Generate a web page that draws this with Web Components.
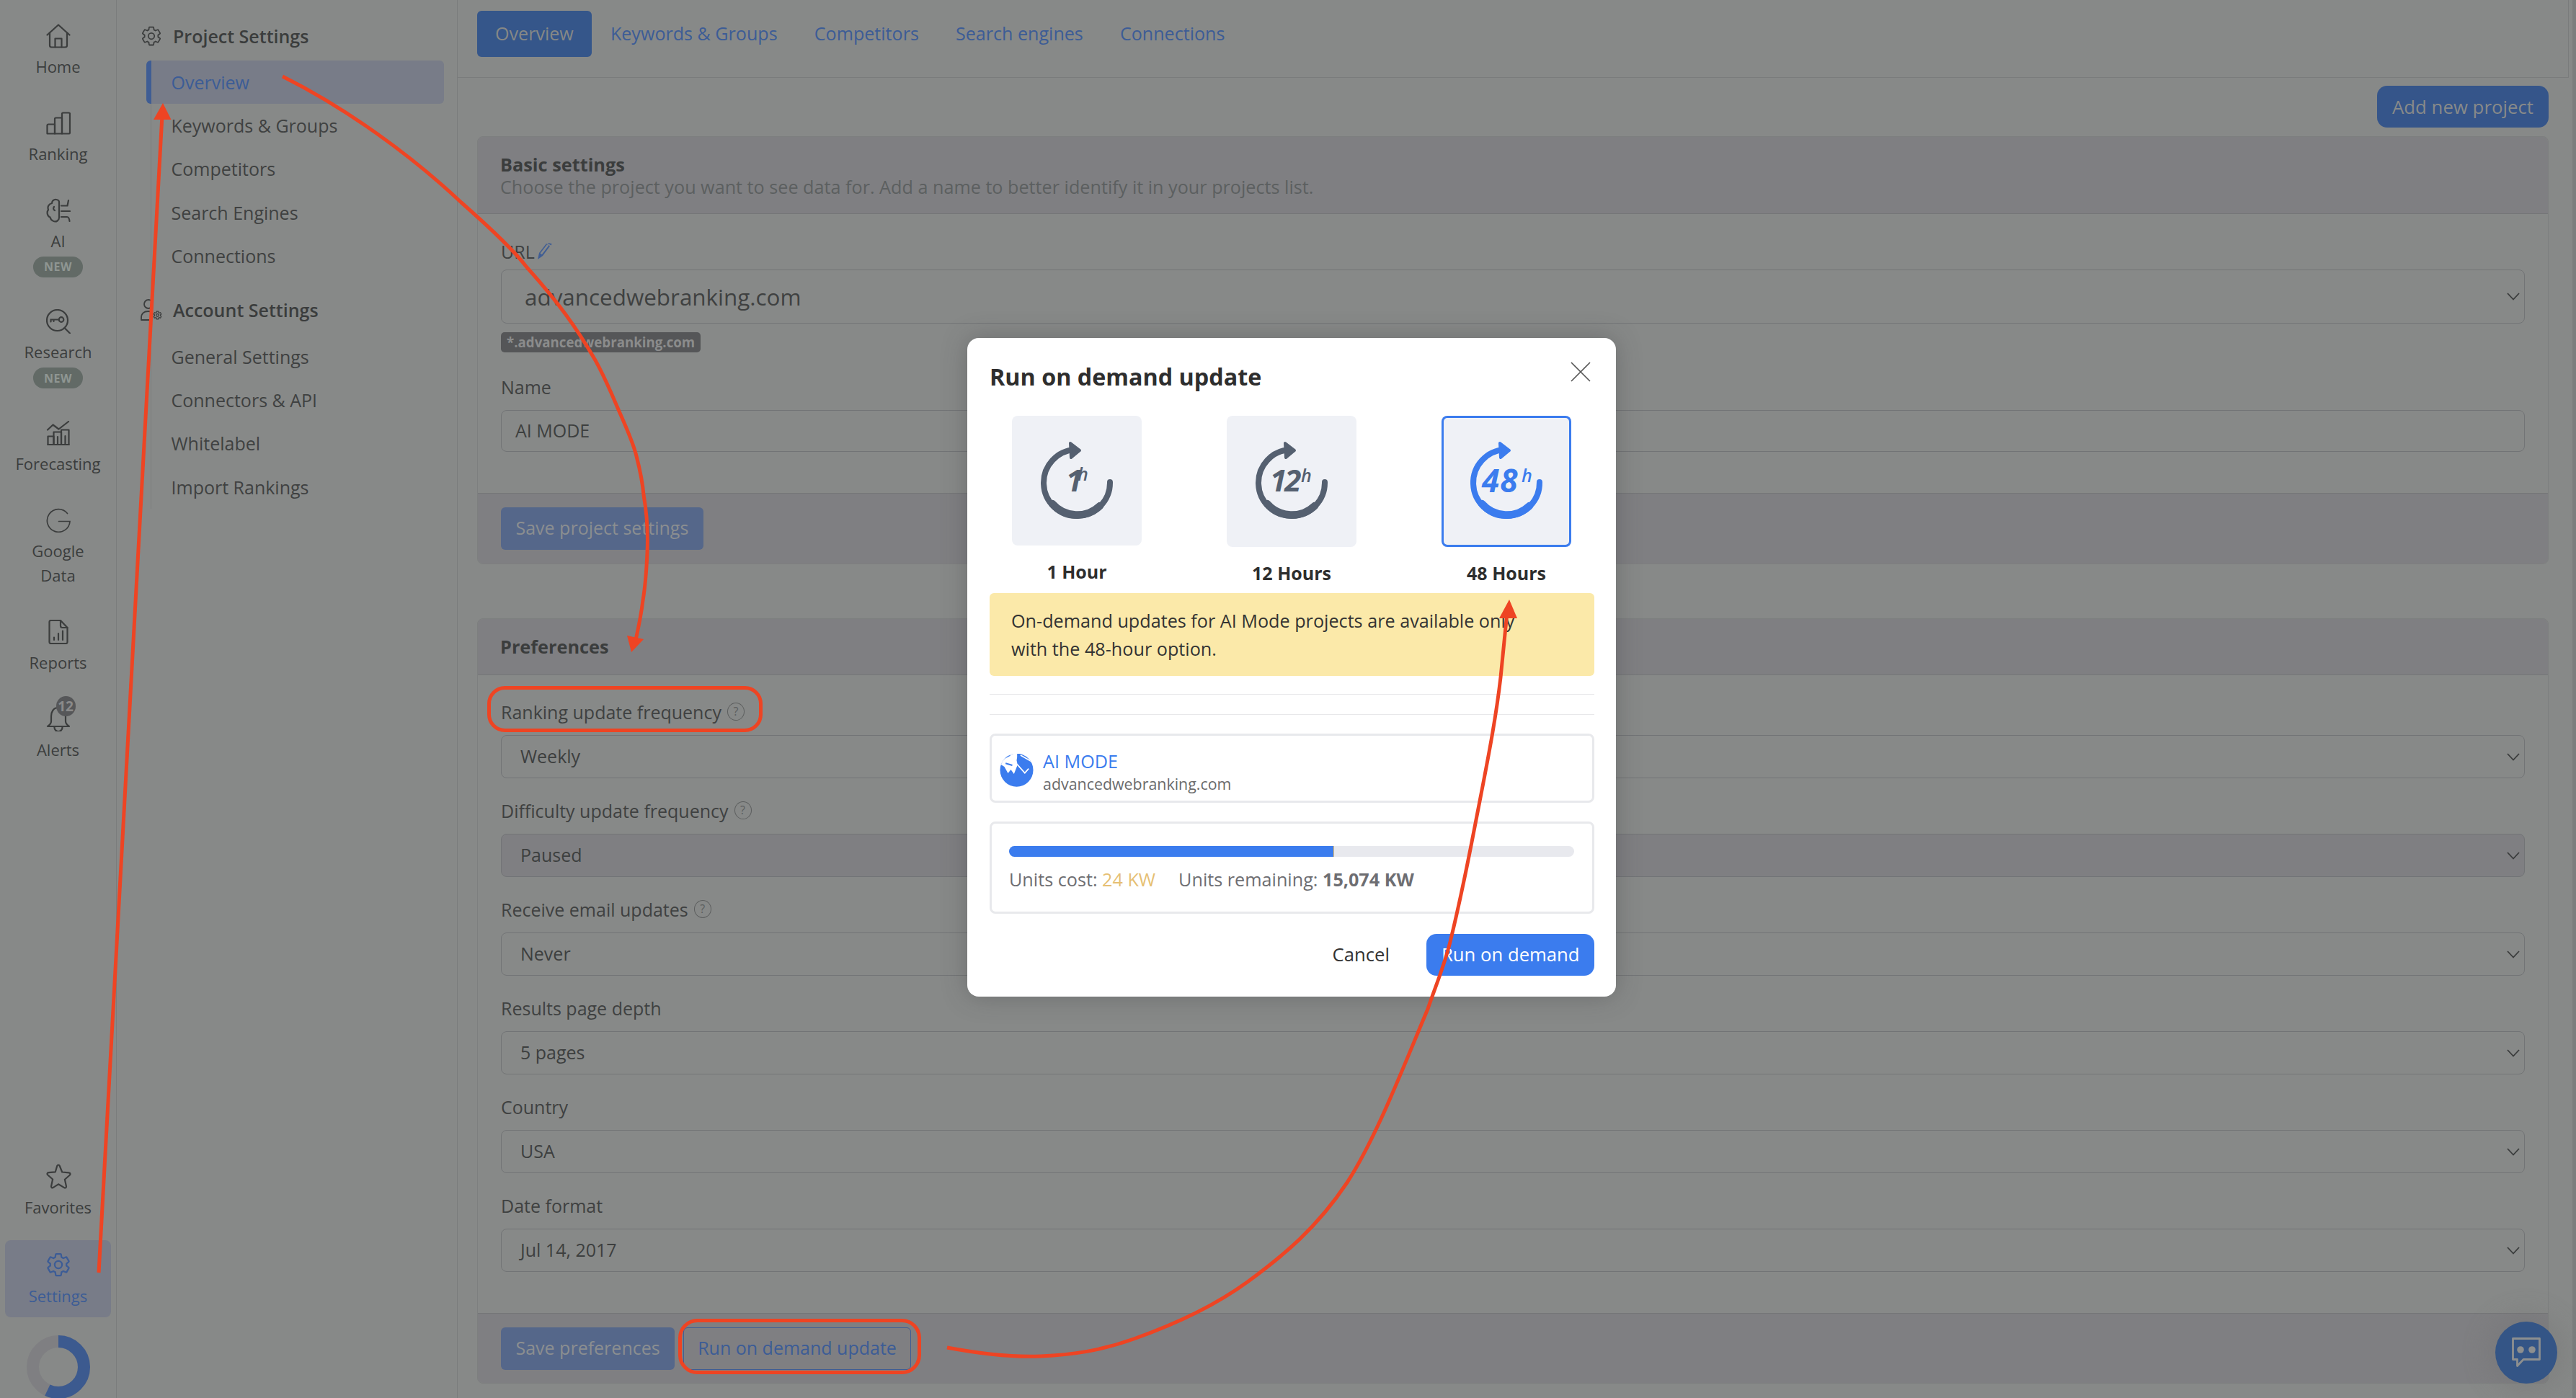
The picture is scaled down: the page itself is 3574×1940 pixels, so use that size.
<!DOCTYPE html>
<html lang="en">
<head>
<meta charset="utf-8">
<title>Project settings</title>
<style>
  html, body { margin: 0; height: 100%; }
  body { width: 3574px; height: 1940px; overflow: hidden; background: #878988; font-family: "Open Sans", "Liberation Sans", sans-serif; }
</style>
</head>
<body>
<app-shell>
  <rail-nav>
    <rail-item>
      <svg slot="icon" width="34" height="34" viewBox="0 0 34 34" fill="none" stroke="currentColor" stroke-width="2.2" stroke-linejoin="round" stroke-linecap="round"><path d="M1.5 15.5 17 1.5l15.500 14"/><path d="M5 12.500V30a2.500 2.500 0 0 0 2.500 2.500h19A2.500 2.500 0 0 0 29 30V12.500"/><path d="M12.500 32.500V20.500h9v12"/></svg>
      Home
    </rail-item>
    <rail-item>
      <svg slot="icon" width="34" height="34" viewBox="0 0 34 34" fill="none" stroke="currentColor" stroke-width="2.200" stroke-linejoin="round"><path d="M1.500 31.500V20a1.500 1.500 0 0 1 1.500-1.500h9V31.500z"/><path d="M12 31.500V11a1.500 1.500 0 0 1 1.500-1.500H22V31.500z"/><path d="M22 31.500V4a1.500 1.500 0 0 1 1.500-1.500h8A1.500 1.500 0 0 1 33 4v26a1.500 1.500 0 0 1-1.500 1.500z"/></svg>
      Ranking
    </rail-item>
    <rail-item>
      <svg slot="icon" width="34" height="34" viewBox="0 0 34 34" fill="none" stroke="currentColor" stroke-width="2.200" stroke-linecap="round" stroke-linejoin="round"><path d="M14 2C10.500 1.500 8 4 8 7 3.500 8 1.500 12 3 16c-2.500 3.500-1.500 9 2.500 10.500C6.500 31 12 34 15.500 31.500c1.500-1 2.500-2.500 2.500-4.500V5.500C18 3.500 16 2.300 14 2z"/><path d="M21 10.500h8.500L31 3"/><path d="M21 18h12"/><path d="M21 26h8c2 0 3 1.500 3.500 6"/><path d="M11 12c-1.500 2-1 4 1 5"/></svg>
      AI
      <new-badge slot="extra">NEW</new-badge>
    </rail-item>
    <rail-item>
      <svg slot="icon" width="34" height="34" viewBox="0 0 34 34" fill="none" stroke="currentColor" stroke-width="2.200" stroke-linecap="round"><circle cx="15.500" cy="15.500" r="14.500"/><path d="M25.500 26 33 33.500"/><circle cx="21" cy="14.500" r="3.300"/><path d="M17.500 14.500H6.500v3M10.500 14.500v2.500"/></svg>
      Research
      <new-badge slot="extra">NEW</new-badge>
    </rail-item>
    <rail-item>
      <svg slot="icon" width="34" height="34" viewBox="0 0 34 34" fill="none" stroke="currentColor" stroke-width="2.200" stroke-linecap="round" stroke-linejoin="round"><path d="M2 12.500 9.500 5.500 17.500 11.500 31 1"/><path d="M2.500 33V21.500h8V33z"/><path d="M10.500 33V15.500h10.500V33z"/><path d="M21 33V12.500h10.500V33z"/><path d="M2.500 33h29"/><path d="M16 33V22M26.500 33V21"/></svg>
      Forecasting
    </rail-item>
    <rail-item>
      <svg slot="icon" width="34" height="34" viewBox="0 0 34 34" fill="none" stroke="currentColor" stroke-width="1.700" stroke-linecap="round"><path d="M29.500 7.500A15.800 15.800 0 1 0 33 18.500H17.500"/></svg>
      Google<br>Data
    </rail-item>
    <rail-item>
      <svg slot="icon" width="34" height="34" viewBox="0 0 34 34" fill="none" stroke="currentColor" stroke-width="2.200" stroke-linecap="round" stroke-linejoin="round"><path d="M7 1h13l9.500 10v20a2 2 0 0 1-2 2H6.500a2 2 0 0 1-2-2V3A2 2 0 0 1 7 1z"/><path d="M20 1v7.500a2.500 2.500 0 0 0 2.500 2.500h7"/><path d="M11 28v-3.500M17 28V19M23 28V15.500"/></svg>
      Reports
    </rail-item>
    <rail-item>
      <span slot="icon" class="bell">
        <svg width="34" height="34" viewBox="0 0 34 34" fill="none" stroke="currentColor" stroke-width="2.200" stroke-linecap="round" stroke-linejoin="round"><path d="M17 1C10 1 7 7 7 13v7c0 3-2 5-5 7h30c-3-2-5-4-5-7v-7c0-6-3-12-10-12z"/><path d="M11.500 27v1.500a5.500 5.500 0 0 0 11 0V27"/></svg>
        <alert-count>12</alert-count>
      </span>
      Alerts
    </rail-item>
    <rail-foot>
      <rail-item>
        <svg slot="icon" width="36" height="36" viewBox="0 0 36 36" fill="none" stroke="currentColor" stroke-width="2.200" stroke-linejoin="round"><path d="M18 1.500c.8 0 1.400.6 1.800 1.500l3.400 8.500 9.300.9c2 .2 2.600 2 1.200 3.300l-6.800 6 2 9.400c.4 1.900-1.200 3-2.800 2L18 28.300 10.900 32.900c-1.600 1-3.200-.1-2.800-2l2-9.400-6.800-6c-1.400-1.300-.8-3.100 1.200-3.300l9.300-.9L16.200 3c.4-.9 1-1.500 1.800-1.500z"/></svg>
        Favorites
      </rail-item>
      <rail-item active>
        <svg slot="icon" width="36" height="36" viewBox="0 0 24 24" fill="none" stroke="currentColor" stroke-width="1.500" stroke-linejoin="round"><path d="M19.430 12.980c.04-.32.07-.64.07-.98s-.03-.66-.07-.98l2.110-1.650c.19-.15.24-.42.12-.64l-2-3.460c-.12-.22-.39-.3-.61-.22l-2.490 1c-.52-.4-1.080-.73-1.690-.98l-.38-2.650C14.460 2.180 14.250 2 14 2h-4c-.25 0-.46.18-.49.42l-.38 2.650c-.61.25-1.170.59-1.690.98l-2.490-1c-.23-.09-.49 0-.61.22l-2 3.460c-.13.22-.07.49.12.64l2.110 1.650c-.04.32-.07.65-.07.98s.03.66.07.98l-2.110 1.650c-.19.15-.24.42-.12.64l2 3.460c.12.22.39.3.61.22l2.490-1c.52.4 1.080.73 1.690.98l.38 2.650c.03.24.24.42.49.42h4c.25 0 .46-.18.49-.42l.38-2.650c.61-.25 1.170-.59 1.690-.98l2.490 1c.23.09.49 0 .61-.22l2-3.460c.12-.22.07-.49-.12-.64l-2.110-1.650z"/><circle cx="12" cy="12" r="3.400"/></svg>
        Settings
      </rail-item>
      <usage-donut></usage-donut>
    </rail-foot>
  </rail-nav>

  <side-nav>
    <nav-head>
      <svg slot="icon" width="30" height="30" viewBox="0 0 24 24" fill="none" stroke="currentColor" stroke-width="1.400" stroke-linejoin="round"><path d="M19.430 12.980c.04-.32.07-.64.07-.98s-.03-.66-.07-.98l2.110-1.650c.19-.15.24-.42.12-.64l-2-3.460c-.12-.22-.39-.3-.61-.22l-2.490 1c-.52-.4-1.080-.73-1.690-.98l-.38-2.650C14.460 2.180 14.250 2 14 2h-4c-.25 0-.46.18-.49.42l-.38 2.650c-.61.25-1.170.59-1.690.98l-2.490-1c-.23-.09-.49 0-.61.22l-2 3.460c-.13.22-.07.49.12.64l2.110 1.650c-.04.32-.07.65-.07.98s.03.66.07.98l-2.110 1.650c-.19.15-.24.42-.12.64l2 3.460c.12.22.39.3.61.22l2.490-1c.52.4 1.080.73 1.690.98l.38 2.650c.03.24.24.42.49.42h4c.25 0 .46-.18.49-.42l.38-2.650c.61-.25 1.170-.59 1.690-.98l2.490 1c.23.09.49 0 .61-.22l2-3.460c.12-.22.07-.49-.12-.64l-2.110-1.650z"/><circle cx="12" cy="12" r="3.400"/></svg>
      Project Settings
    </nav-head>
    <nav-link active>Overview</nav-link>
    <nav-link>Keywords &amp; Groups</nav-link>
    <nav-link>Competitors</nav-link>
    <nav-link>Search Engines</nav-link>
    <nav-link>Connections</nav-link>
    <nav-head second>
      <svg slot="icon" width="30" height="30" viewBox="0 0 30 30" fill="none" stroke="currentColor" stroke-width="1.800" stroke-linecap="round" stroke-linejoin="round"><circle cx="11" cy="7" r="6"/><path d="M1 29v-3c0-6 4-9 9.500-9 2 0 3.500.4 5 1M1 29h14"/><g transform="translate(17 16) scale(.54)" stroke-width="2.400"><path d="M19.430 12.980c.04-.32.07-.64.07-.98s-.03-.66-.07-.98l2.110-1.650c.19-.15.24-.42.12-.64l-2-3.460c-.12-.22-.39-.3-.61-.22l-2.490 1c-.52-.4-1.080-.73-1.690-.98l-.38-2.650C14.460 2.180 14.250 2 14 2h-4c-.25 0-.46.18-.49.42l-.38 2.650c-.61.25-1.170.59-1.690.98l-2.490-1c-.23-.09-.49 0-.61.22l-2 3.460c-.13.22-.07.49.12.64l2.110 1.650c-.04.32-.07.65-.07.98s.03.66.07.98l-2.110 1.650c-.19.15-.24.42-.12.64l2 3.460c.12.22.39.3.61.22l2.490-1c.52.4 1.080.73 1.690.98l.38 2.650c.03.24.24.42.49.42h4c.25 0 .46-.18.49-.42l.38-2.650c.61-.25 1.170-.59 1.690-.98l2.490 1c.23.09.49 0 .61-.22l2-3.460c.12-.22.07-.49-.12-.64l-2.110-1.650z"/><circle cx="12" cy="12" r="3.400"/></g></svg>
      Account Settings
    </nav-head>
    <nav-link>General Settings</nav-link>
    <nav-link>Connectors &amp; API</nav-link>
    <nav-link>Whitelabel</nav-link>
    <nav-link>Import Rankings</nav-link>
  </side-nav>

  <main-view>
    <tab-bar>
      <tab-item active>Overview</tab-item>
      <tab-item>Keywords &amp; Groups</tab-item>
      <tab-item>Competitors</tab-item>
      <tab-item>Search engines</tab-item>
      <tab-item>Connections</tab-item>
    </tab-bar>
    <page-toolbar><app-button variant="solid">Add new project</app-button></page-toolbar>

    <settings-panel heading="Basic settings" description="Choose the project you want to see data for. Add a name to better identify it in your projects list.">
      <form-field large label="URL" value="advancedwebranking.com">
        <svg slot="after" width="22" height="24" viewBox="0 0 22 24" fill="#3f5d94" style="margin-left:-5px"><path d="M1 23 3 14 13 1l5 3.500L8 18z M4.500 14.500 14 2.200l2.300 1.600L6.800 16.200z" fill-rule="evenodd"/><path d="M14.500 0l5 3.500 1.200-2L16 0z"/></svg>
        <field-tag slot="below">*.advancedwebranking.com</field-tag>
      </form-field>
      <form-field input label="Name" value="AI MODE"></form-field>
      <app-button slot="footer" variant="muted">Save project settings</app-button>
    </settings-panel>

    <settings-panel second heading="Preferences">
      <form-field help label="Ranking update frequency" value="Weekly"></form-field>
      <form-field help disabled label="Difficulty update frequency" value="Paused"></form-field>
      <form-field help label="Receive email updates" value="Never"></form-field>
      <form-field label="Results page depth" value="5 pages"></form-field>
      <form-field label="Country" value="USA"></form-field>
      <form-field last label="Date format" value="Jul 14, 2017"></form-field>
      <app-button slot="footer" variant="muted">Save preferences</app-button>
      <app-button slot="footer" variant="outline">Run on demand update</app-button>
    </settings-panel>
  </main-view>

  <od-modal>
    <time-card slot="cards" digits="1" label="1 Hour" dx="75" hx="91" hy="90" short></time-card>
    <time-card slot="cards" digits="12" label="12 Hours" dx="60" hx="103" hy="92"></time-card>
    <time-card slot="cards" digits="48" label="48 Hours" dx="56" hx="111" hy="92" wide selected></time-card>
  </od-modal>
  <chat-bubble></chat-bubble>
  <annotation-layer></annotation-layer>
</app-shell>

<script>
const GREY_TEXT = '#3b3d3d'
const BLUE_TEXT = '#3c5c96'

// small helper, every element gets an open shadow root from a template
function component(name, css, html, extra) {
  const template = document.createElement('template')
  template.innerHTML = `<style>${css}</style>${html}`
  class Element_ extends HTMLElement {
    constructor() {
      super()
      this.attachShadow({ mode: 'open' }).appendChild(template.content.cloneNode(true))
    }
    connectedCallback() {
      if (extra) extra.call(this, this.shadowRoot)
    }
  }
  customElements.define(name, Element_)
}

component('app-shell', `
  :host { display: flex; position: relative; width: 3574px; height: 1940px; overflow: hidden; color: ${GREY_TEXT}; }
`, `<slot></slot>`)

component('rail-nav', `
  :host { display: flex; flex-direction: column; gap: 44.800px; box-sizing: border-box; width: 162px; height: 1940px; padding-top: 33px; border-right: 1px solid #7a7c7c; flex: none; overflow: hidden; }
`, `<slot></slot>`)

component('rail-foot', `
  :host { display: flex; flex-direction: column; margin-top: auto; }
`, `<slot></slot>`)

component('rail-item', `
  :host { display: flex; flex-direction: column; align-items: center; font-size: 22px; color: ${GREY_TEXT}; text-align: center; }
  :host([active]) { margin: 29px 7px 0; padding: 17px 0 13px; border-radius: 8px; background: #787c88; color: ${BLUE_TEXT}; }
  .icon { display: flex; align-items: center; justify-content: center; height: 34px; }
  .label { margin-top: 8px; line-height: 34px; }
  :host([active]) .label { margin-top: 9px; }
  ::slotted(.bell) { position: relative; display: block; height: 34px; }
  ::slotted(new-badge) { margin-top: 5px; }
`, `<div class="icon"><slot name="icon"></slot></div><div class="label"><slot></slot></div><slot name="extra"></slot>`)

component('new-badge', `
  :host { display: flex; align-items: center; justify-content: center; width: 69px; height: 29px; border-radius: 15px; background: #626a66; color: #8f9692; font-size: 16px; font-weight: 700; letter-spacing: .5px; }
`, `<slot></slot>`)

component('alert-count', `
  :host { position: absolute; left: 14px; top: -15px; display: flex; align-items: center; justify-content: center; width: 27px; height: 28px; border-radius: 50%; background: #565759; color: #8a8a8a; font-size: 19px; font-weight: 700; }
`, `<slot></slot>`)

component('usage-donut', `
  :host { display: flex; justify-content: center; margin-top: 25px; height: 87px; }
`, `<svg width="88" height="88" viewBox="0 0 88 88" fill="none" stroke-width="17">
  <circle cx="44" cy="44" r="35.5" stroke="#7f7f82"/>
  <circle cx="44" cy="44" r="35.5" stroke="#3c5a8f" stroke-dasharray="127 223" transform="rotate(-90 44 44)"/>
</svg>`)

component('side-nav', `
  :host { display: block; box-sizing: border-box; width: 473px; height: 1940px; padding-top: 35px; border-right: 1px solid #7a7c7c; flex: none; font-size: 25px;
    background: linear-gradient(#7d7f7f, #7d7f7f) 47px 144px / 1px 562px no-repeat; }
`, `<slot></slot>`)

component('nav-head', `
  :host { display: flex; align-items: center; gap: 15px; height: 30px; padding-left: 33px; margin-bottom: 19px; font-weight: 600; color: ${GREY_TEXT}; }
  :host([second]) { margin-top: 29px; margin-bottom: 20px; }
  ::slotted(svg) { display: block; }
`, `<slot name="icon"></slot><slot></slot>`)

component('nav-link', `
  :host { display: flex; align-items: center; box-sizing: border-box; height: 60.4px; margin: 0 18px 0 41px; padding: 0 0 1px 34.5px; color: #3f4141; border-radius: 6px; }
  :host([active]) { background: #787c88; border-left: 7px solid #3f5d94; padding-left: 27.5px; color: ${BLUE_TEXT}; }
`, `<slot></slot>`)

component('main-view', `
  :host { display: flex; flex-direction: column; box-sizing: border-box; width: 2939px; height: 1940px; flex: none; border-right: 5px solid #7c7e7e; overflow: hidden; }
`, `<slot></slot>`)

component('tab-bar', `
  :host { display: flex; gap: 1.100px; box-sizing: border-box; height: 108px; margin-right: 5px; padding: 15px 0 0 27px; border-bottom: 1px solid #7a7c7c; border-right: 1px solid #7a7c7c; }
`, `<slot></slot>`)

component('tab-item', `
  :host { display: block; height: 64px; padding: 0 25px; line-height: 62px; font-size: 25.100px; color: ${BLUE_TEXT}; border-radius: 6px; }
  :host([active]) { background: #35568a; color: #868886; }
`, `<slot></slot>`)

component('page-toolbar', `
  :host { display: flex; justify-content: flex-end; margin: 11px 33px 12px 27px; }
`, `<slot></slot>`)

component('app-button', `
  :host { display: inline-flex; align-items: center; box-sizing: border-box; height: 59px; padding: 0 20.5px 3px; font-size: 25px; border-radius: 6px; white-space: nowrap; }
  :host([variant=solid]) { background: #35558a; color: #888a89; border-radius: 14px; height: 58px; font-size: 25.800px; font-weight: 500; padding: 0 21px; }
  :host([variant=muted]) { background: #55678a; color: #8b8e90; }
  :host([variant=outline]) { border: 1.5px solid #3f5d94; color: ${BLUE_TEXT}; padding: 0 19px 3px; }
`, `<slot></slot>`)

component('settings-panel', `
  :host { display: block; box-sizing: border-box; margin: 0 33px 0 27px; border: 1px solid #7d7f7f; border-radius: 8px; overflow: hidden; }
  :host([second]) { margin-top: 75px; }
  header { display: flex; flex-direction: column; justify-content: center; box-sizing: border-box; height: 107px; padding: 1px 31px 0; background: #7f7f82; border-bottom: 1px solid #747677; line-height: 31px; }
  :host([second]) header { height: 78px; padding-top: 0; }
  h2 { margin: 0; font-size: 25.300px; font-weight: 700; color: #3b3d3d; }
  p { margin: 0; font-size: 25.200px; color: #5c5f60; }
  p:empty { display: none; }
  .body { padding: 35px 32px 57px; }
  :host([second]) .body { padding-top: 34px; }
  footer { display: flex; gap: 12px; padding: 19px 32px 19px; background: #7f7f82; border-top: 1px solid #747677; }
  :host([second]) footer { padding-bottom: 18px; }
`, `<header><h2></h2><p></p></header><div class="body"><slot></slot></div><footer><slot name="footer"></slot></footer>`, function (root) {
  root.querySelector('h2').textContent = this.getAttribute('heading')
  root.querySelector('p').textContent = this.getAttribute('description') || ''
})

component('form-field', `
  :host { display: block; margin-bottom: 28px; font-size: 25px; }
  :host([large]) { margin-bottom: 31px; }
  :host([input]), :host([last]) { margin-bottom: 0; }
  .label { display: flex; align-items: center; gap: 8px; box-sizing: border-box; height: 34px; padding-bottom: 1px; color: #3f4141; }
  .control { display: flex; align-items: center; justify-content: space-between; box-sizing: border-box; height: 60px; margin-top: 15px; padding: 0 6px 0 26px; border: 1px solid #727476; border-radius: 8px; color: #3d3f3f; }
  .value { margin-bottom: 2px; }
  :host([large]) .control { height: 75px; margin-top: 8px; padding-left: 32px; font-size: 31.400px; color: #3f4141; }
  :host([large]) .value { margin-bottom: 0; }
  :host([input]) .control { height: 58px; padding-left: 19px; }
  :host([disabled]) .control { background: #7f7f82; }
  .help { display: none; box-sizing: border-box; width: 24px; height: 25px; border: 1.5px solid #5c5e5e; border-radius: 50%; color: #5c5e5e; font-size: 16px; line-height: 22px; text-align: center; }
  :host([help]) .help { display: block; }
  :host([input]) .chev { display: none; }
  .chev { display: block; }
  ::slotted([slot=below]) { margin-top: 12px; }
`, `<div class="label"><span class="text"></span><span class="help">?</span><slot name="after"></slot></div>
<div class="control"><span class="value"></span><svg class="chev" width="18" height="11" viewBox="0 0 18 11" fill="none" stroke="#3a3c3c" stroke-width="1.800"><path d="M1 1l8 8.500L17 1"/></svg></div>
<slot name="below"></slot>`, function (root) {
  root.querySelector('.text').textContent = this.getAttribute('label')
  root.querySelector('.value').textContent = this.getAttribute('value')
})

component('field-tag', `
  :host { display: inline-flex; align-items: center; box-sizing: border-box; height: 28px; padding: 0 8px 1px; border-radius: 5px; background: #555658; color: #8b8c8c; font-size: 18.700px; font-weight: 700; vertical-align: top; }
`, `<slot></slot>`)

component('od-modal', `
  :host { position: absolute; left: 1342px; top: 469px; box-sizing: border-box; width: 900px; height: 914px; padding: 29px 30px 29px 31px; background: #fff; border-radius: 16px; box-shadow: 0 0 34px rgba(60,60,64,.35); color: #333; font-size: 25.200px; z-index: 5; }
  .title { display: flex; justify-content: space-between; align-items: flex-start; height: 50px; }
  h1 { margin: 0; font-size: 32.300px; line-height: 49px; font-weight: 700; color: #2e2e2e; }
  .close { display: block; margin: 4px 5px 0 0; }
  .cards { display: flex; justify-content: center; gap: 118px; margin: 29px -30px 0 -31px; height: 235px; }
  .notice { box-sizing: border-box; height: 115px; margin-top: 11px; padding: 19px 30px; background: #fbe9a9; border-radius: 6px; line-height: 39px; color: #333; }
  hr { margin: 25px 0 0; border: 0; border-top: 1px solid #e8e8ea; }
  hr + hr { margin-top: 27px; }
  .box { box-sizing: border-box; margin-top: 26px; border: 3px solid #e8e9ec; border-radius: 8px; }
  .project { display: flex; gap: 13px; height: 96px; padding: 20px 0 0 11px; }
  .globe { display: block; margin-top: 5px; flex: none; }
  .name { color: #3b7cee; line-height: 31px; }
  .domain { color: #6b6b6b; font-size: 21.400px; line-height: 31px; }
  .units { height: 128px; padding: 31px 25px 0 24px; color: #6e6e72; }
  .track { height: 15px; border-radius: 8px; background: #e8e9ee; overflow: hidden; }
  .fill { width: 451px; height: 15px; background: #3b7cee; border-right: 1px solid #e6bf73; box-sizing: border-box; }
  .stats { display: flex; gap: 32px; margin-top: 14px; line-height: 34px; }
  .cost { color: #e6bf73; }
  b { font-weight: 700; }
  .actions { display: flex; justify-content: flex-end; align-items: center; gap: 51px; margin-top: 28px; font-size: 25.700px; }
  .cancel { margin-bottom: 2px; }
  .run { display: flex; align-items: center; box-sizing: border-box; width: 233px; height: 58px; padding: 0 0 2px 21px; background: #3b7cee; color: #fff; border-radius: 14px; }
`, `<div class="title"><h1>Run on demand update</h1>
  <svg class="close" width="28" height="28" viewBox="0 0 28 28" stroke="#555" stroke-width="1.600" fill="none"><path d="M1 1l26 26M27 1 1 27"/></svg></div>
<div class="cards"><slot name="cards"></slot></div>
<div class="notice">On-demand updates for AI Mode projects are available only<br>with the 48-hour option.</div>
<hr><hr>
<div class="box project">
  <svg class="globe" width="47" height="46" viewBox="37 44 138 138"><defs><clipPath id="g"><circle cx="106" cy="112" r="69"/></clipPath></defs>
    <g clip-path="url(#g)"><rect x="30" y="40" width="150" height="150" fill="#3b7cee"/>
      <path d="M30 30H108V58L106 72 110 90 95 128 82 110 70 125 55 98 36 86Z" fill="#fff"/>
      <path d="M50 62 78 48" stroke="#3b7cee" stroke-width="10" fill="none"/>
      <path d="M60 84 88 92" stroke="#3b7cee" stroke-width="6" fill="none"/>
      <path d="M108 88 140 124 156 106M122 50 168 76" stroke="#fff" stroke-width="5" fill="none"/></g></svg>
  <div><div class="name">AI MODE</div><div class="domain">advancedwebranking.com</div></div>
</div>
<div class="box units">
  <div class="track"><div class="fill"></div></div>
  <div class="stats"><span>Units cost: <span class="cost">24 KW</span></span><span>Units remaining: <b>15,074 KW</b></span></div>
</div>
<div class="actions"><span class="cancel">Cancel</span><span class="run">Run on demand</span></div>`)

component('time-card', `
  :host { display: flex; flex-direction: column; align-items: center; width: 180px; --ink: #556070; }
  :host([selected]) { --ink: #3b7cee; }
  .tile { display: block; width: 180px; height: 182px; border-radius: 8px; background: #eff1f6; overflow: hidden; }
  :host([short]) .tile { height: 180px; }
  :host([selected]) .tile { box-shadow: inset 0 0 0 3px #3b7cee; }
  svg { display: block; }
  svg text { font-family: "Open Sans", "Liberation Sans", sans-serif; font-style: italic; font-weight: 700; fill: var(--ink); }
  svg text.h { font-weight: 600; }
  .label { margin-top: 19px; line-height: 34px; font-size: 25px; font-weight: 700; color: #2e2e2e; white-space: nowrap; }
`, `<div class="tile"><svg width="180" height="182" viewBox="0 0 180 182" fill="none" stroke-linecap="round" stroke-linejoin="round">
    <path d="M136 92A46 46 0 1 1 88 47" stroke="var(--ink)" stroke-width="8"/>
    <path d="M122 125A46 46 0 0 1 56 122" stroke="var(--ink)" stroke-width="10.500"/>
    <path d="M81 38 94 48 82 58Z" fill="var(--ink)" stroke="var(--ink)" stroke-width="4"/>
    <text class="d" y="105" font-size="42" letter-spacing="-3"></text>
    <text class="h" font-size="25"></text>
  </svg></div><div class="label"></div>`, function (root) {
  const d = root.querySelector('.d')
  const h = root.querySelector('.h')
  d.textContent = this.getAttribute('digits')
  d.setAttribute('x', this.getAttribute('dx'))
  if (this.hasAttribute('wide')) {
    d.setAttribute('font-size', '44')
    d.setAttribute('letter-spacing', '1')
    d.setAttribute('y', '106')
  }
  h.textContent = 'h'
  h.setAttribute('x', this.getAttribute('hx'))
  h.setAttribute('y', this.getAttribute('hy'))
  root.querySelector('.label').textContent = this.getAttribute('label')
})

component('chat-bubble', `
  :host { position: absolute; left: 3462px; top: 1834px; display: flex; align-items: center; justify-content: center; width: 86px; height: 86px; border-radius: 50%; background: #345586; box-shadow: 0 0 32px 14px rgba(112,112,114,.3); z-index: 4; }
`, `<svg width="42" height="42" viewBox="0 0 42 42" fill="none" stroke="#8d8f8f" stroke-width="2.800" stroke-linejoin="round"><path d="M2.500 1.500h37v29H17L8.500 39.500V30.500h-6z"/><circle cx="13" cy="17" r="4.800" fill="#8d8f8f" stroke="none"/><circle cx="29" cy="17" r="4.800" fill="#8d8f8f" stroke="none"/></svg>`)

component('annotation-layer', `
  :host { position: absolute; left: 0; top: 0; width: 3574px; height: 1940px; pointer-events: none; z-index: 10; }
  svg { display: block; }
`, `<svg width="3574" height="1940" viewBox="0 0 3574 1940" fill="none" stroke="#ee4423" stroke-width="5">
  <path d="M137 1766 225 160"/>
  <path d="M226 143 237.500 166 213 166Z" fill="#ee4423" stroke="none"/>
  <path d="M392 106C480 150 570 215 640 281C690 325 715 350 731 371C775 420 800 455 826 500C840 525 850 550 860 573C872 600 880 620 883 633C890 660 892 675 893 687C898 715 899 745 898 767C897 790 895 815 892 833C890 850 886 870 882 888"/>
  <path d="M876 905 870 882 893 887Z" fill="#ee4423" stroke="none"/>
  <path d="M1314 1870C1357 1878 1401 1884 1444 1882C1487 1880 1525 1875 1573 1858C1621 1841 1683 1814 1732 1778C1781 1742 1827 1704 1869 1641C1910 1578 1948 1478 1981 1400C1991 1370 2003 1343 2012 1307C2024 1258 2034 1210 2045 1153C2058 1085 2074 1010 2082 940L2091 850"/>
  <path d="M2094 832 2105 858 2080 858Z" fill="#ee4423" stroke="none"/>
  <rect x="678.500" y="954.500" width="377" height="59" rx="22"/>
  <rect x="943.500" y="1832.500" width="332" height="72" rx="24"/>
</svg>`)
</script>
</body>
</html>
